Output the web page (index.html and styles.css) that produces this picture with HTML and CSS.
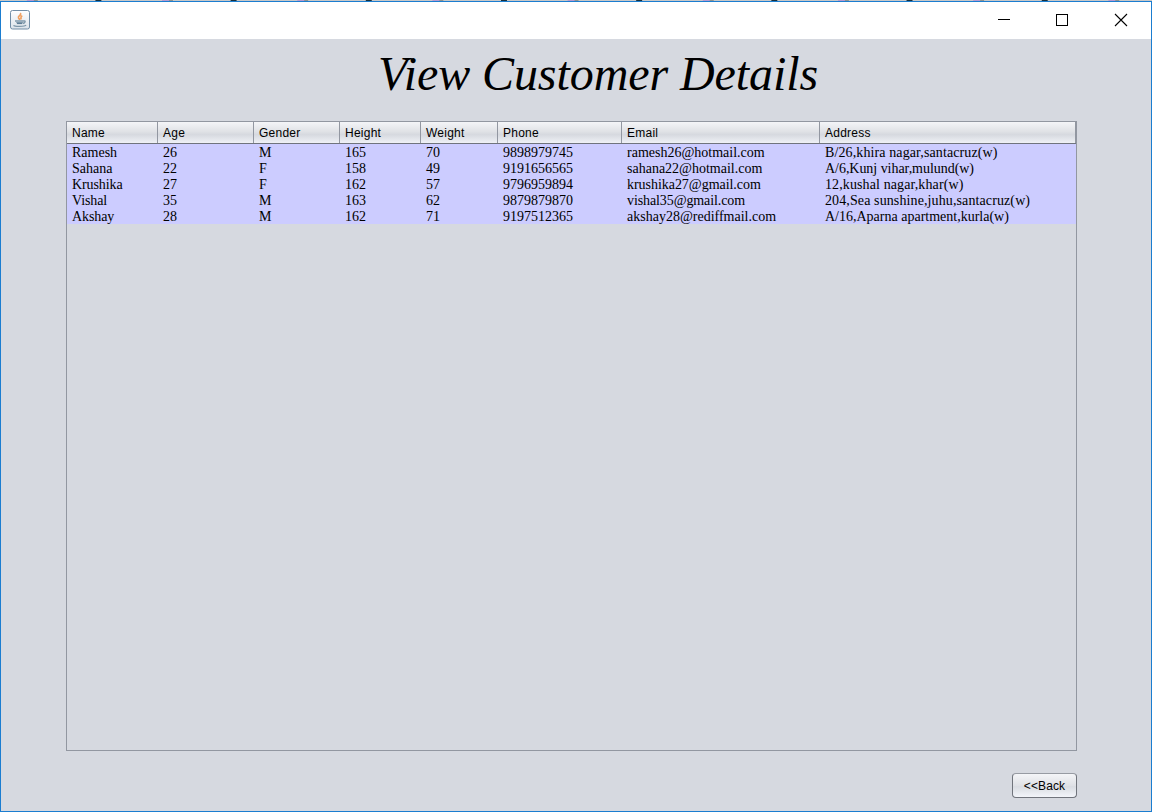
FILE: index.html
```html
<!DOCTYPE html>
<html lang="en">
<head>
<meta charset="utf-8">
<title>View Customer Details</title>
<link rel="stylesheet" href="styles.css">
</head>
<body>
<div class="desktop-strip"></div>
<div class="window">
  <header class="titlebar">
    <svg class="app-icon" width="20" height="20" viewBox="0 0 20 20">
      <defs><linearGradient id="g" x1="0" y1="0" x2="0" y2="1"><stop offset="0" stop-color="#fff"/><stop offset="1" stop-color="#dbe3ea"/></linearGradient></defs>
      <rect x=".5" y=".5" width="19" height="18.5" rx="2" fill="url(#g)" stroke="#728ea6"/>
      <path d="M10.2 3.2c1.800 1.800-2.800 2.900-1.700 4.600.4.800 1.300 1.300 1.200 2.200M12.300 5.800c-2.400 1.200-1 2.200-1.300 3.500" fill="none" stroke="#f0a060" stroke-width="1.7"/>
      <path d="M5 11h9M6.300 12.600h6.500M13.200 11c3-.9 2.200 2-.5 2.500M3.500 15.300c1 1.500 11.500 1.500 12.500-.3" fill="none" stroke="#7f98aa" stroke-width="1.400"/>
      <path d="M7 13.600h5" fill="none" stroke="#54758f"/>
    </svg>
    <svg class="controls" width="132" height="14" viewBox="0 0 132 14" fill="none" stroke="#000">
      <path d="M0 6.500h12M58.500 1.500h11v11h-11z" shape-rendering="crispEdges"/>
      <path d="M117 1l12 12M129 1l-12 12" stroke-width="1.100"/>
    </svg>
  </header>
  <main class="content">
    <h1 class="title">View Customer Details</h1>
    <section class="pane">
      <div class="row head"><span>Name</span><span>Age</span><span>Gender</span><span>Height</span><span>Weight</span><span>Phone</span><span>Email</span><span>Address</span></div>
      <div class="row"><span>Ramesh</span><span>26</span><span>M</span><span>165</span><span>70</span><span>9898979745</span><span>ramesh26@hotmail.com</span><span class="loose">B/26,khira nagar,santacruz(w)</span></div>
      <div class="row"><span>Sahana</span><span>22</span><span>F</span><span>158</span><span>49</span><span>9191656565</span><span>sahana22@hotmail.com</span><span class="snug">A/6,Kunj vihar,mulund(w)</span></div>
      <div class="row"><span class="tight">Krushika</span><span>27</span><span>F</span><span>162</span><span>57</span><span>9796959894</span><span class="snug">krushika27@gmail.com</span><span class="loose">12,kushal nagar,khar(w)</span></div>
      <div class="row"><span class="tight">Vishal</span><span>35</span><span>M</span><span>163</span><span>62</span><span>9879879870</span><span class="tight">vishal35@gmail.com</span><span class="loose">204,Sea sunshine,juhu,santacruz(w)</span></div>
      <div class="row"><span class="tight">Akshay</span><span>28</span><span>M</span><span>162</span><span>71</span><span>9197512365</span><span>akshay28@rediffmail.com</span><span>A/16,Aparna apartment,kurla(w)</span></div>
    </section>
    <button class="back">&lt;&lt;Back</button>
  </main>
</div>
</body>
</html>
```

FILE: styles.css
```css
* { box-sizing: border-box; }
body { margin: 0; height: 812px; overflow: hidden; color: #000; display: flex; flex-direction: column; }
.desktop-strip {
  height: 1px;
  background: linear-gradient(90deg, #c8c8c8 27px, #b79ad0 27px 34px, #8d938e 34px 38px, #c8c8c8 38px 95px, #17303c 95px 101px, #c8c8c8 101px) 0 0 / 135.2px 1px;
}
.window { height: 811px; border: 1px solid #1b7dd0; background: #d6d9e0; }
.titlebar { height: 37px; background: #fff; display: flex; justify-content: space-between; align-items: flex-start; padding: 8px 21px 0 9px; }
.controls { margin-top: 3px; }
.content { display: flex; flex-direction: column; padding: 0 74px 0 65px; }
.title { margin: 7px 0 0 312px; height: 75px; font: italic 400 48px/55px "Liberation Serif", serif; letter-spacing: -.08px; white-space: nowrap; }
.pane { height: 630px; border: 1px solid #9297a1; }
.row { display: grid; grid-template-columns: 91px 96px 86px 81px 77px 124px 198px 256px; height: 16px; background: #ccccff; font: 14px/18px "Liberation Serif", serif; white-space: nowrap; }
.row span { padding-left: 5px; }
.row .loose { letter-spacing: .11px; }
.row .snug { letter-spacing: -.04px; }
.row .tight { letter-spacing: -.1px; }
.head { height: 22px; font: 12px/22px "Liberation Sans", sans-serif; letter-spacing: .25px; background: linear-gradient(#f4f5f8, #e0e2e6 45%, #d6d9df 60%, #eff1f6); border-bottom: 1px solid #70747d; }
.head span { height: 21px; line-height: 23px; border-right: 1px solid #9297a1; }
.back { align-self: flex-end; width: 65px; height: 25px; margin: 22px 0 0; padding: 2px 0 0; border: 1px solid #70747c; border-top-color: #979ba3; border-radius: 4px; background: linear-gradient(#f4f5f8, #dfe1e6 50%, #d9dce2 55%, #f3f5fa); font: 12px/21px "Liberation Sans", sans-serif; letter-spacing: .1px; color: #000; }
```
